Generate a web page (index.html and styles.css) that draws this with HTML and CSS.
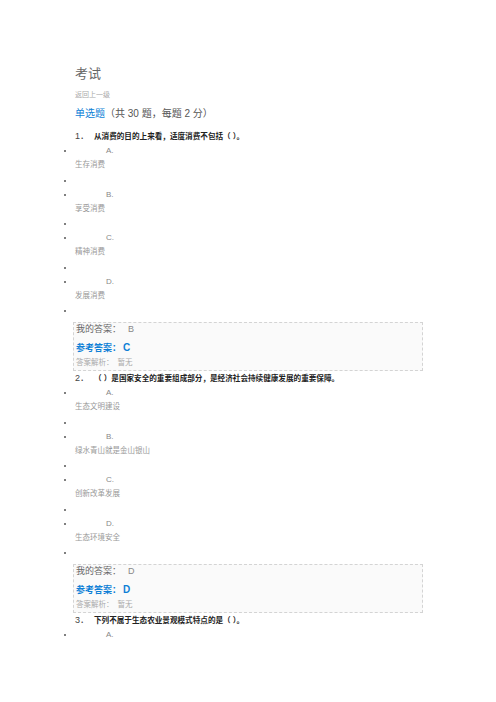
FILE: index.html
```html
<!DOCTYPE html>
<html lang="zh-CN">
<head>
  <meta charset="UTF-8" />
  <title>考试</title>
  <link rel="stylesheet" href="styles.css">
</head>
<body>

<div class="page">
  <h1 class="title">考试</h1>
  <a class="back" href="#">返回上一级</a>
  <h2 class="type"><span class="type-name">单选题</span>（共 30 题，每题 2 分）</h2>

  <!-- QUESTION 1 -->
  <div class="q-title"><span class="q-num">1．</span>从消费的目的上来看，适度消费不包括（ ）。</div>
  <ul class="options">
    <li class="opt-letter">A.</li>
    <li class="opt-text">生存消费</li>
    <li class="opt-empty">&nbsp;</li>
    <li class="opt-letter">B.</li>
    <li class="opt-text">享受消费</li>
    <li class="opt-empty">&nbsp;</li>
    <li class="opt-letter">C.</li>
    <li class="opt-text">精神消费</li>
    <li class="opt-empty">&nbsp;</li>
    <li class="opt-letter">D.</li>
    <li class="opt-text">发展消费</li>
    <li class="opt-empty">&nbsp;</li>
  </ul>
  <div class="answer">
    <div class="my">我的答案：<span class="my-val">B</span></div>
    <div class="ref">参考答案：<span class="ref-val">C</span></div>
    <div class="explain">答案解析：<span class="explain-val">暂无</span></div>
  </div>

  <!-- QUESTION 2 -->
  <div class="q-title"><span class="q-num">2．</span>（ ）是国家安全的重要组成部分，是经济社会持续健康发展的重要保障。</div>
  <ul class="options">
    <li class="opt-letter">A.</li>
    <li class="opt-text">生态文明建设</li>
    <li class="opt-empty">&nbsp;</li>
    <li class="opt-letter">B.</li>
    <li class="opt-text">绿水青山就是金山银山</li>
    <li class="opt-empty">&nbsp;</li>
    <li class="opt-letter">C.</li>
    <li class="opt-text">创新改革发展</li>
    <li class="opt-empty">&nbsp;</li>
    <li class="opt-letter">D.</li>
    <li class="opt-text">生态环境安全</li>
    <li class="opt-empty">&nbsp;</li>
  </ul>
  <div class="answer">
    <div class="my">我的答案：<span class="my-val">D</span></div>
    <div class="ref">参考答案：<span class="ref-val">D</span></div>
    <div class="explain">答案解析：<span class="explain-val">暂无</span></div>
  </div>

  <!-- QUESTION 3 -->
  <div class="q-title"><span class="q-num">3．</span>下列不属于生态农业景观模式特点的是（ ）。</div>
  <ul class="options">
    <li class="opt-letter">A.</li>
  </ul>
</div>

</body>
</html>
```

FILE: styles.css
```css
* {
  box-sizing: border-box;
  margin: 0;
  padding: 0;
}
body {
  font-family: "Liberation Sans", "Noto Sans CJK SC", sans-serif;
  background-color: #fff;
  color: #333;
}

.page {
  padding: 64px 0 0 75px;
  width: 423px;
}

/* HEADER */
.title {
  font-size: 13px;
  font-weight: normal;
  line-height: 20px;
  color: #666;
}
.back {
  display: block;
  font-size: 7px;
  line-height: 22px;
  color: #aaa;
  text-decoration: none;
}
.type {
  font-size: 10px;
  font-weight: normal;
  line-height: 16px;
  color: #555;
}
.type-name {
  color: #0e7fd6;
}

/* QUESTIONS */
.q-title {
  font-size: 7.6px;
  font-weight: bold;
  line-height: 14px;
  color: #222;
}
.q-title:first-of-type {
  margin-top: 7px;
}
.q-num {
  display: inline-block;
  width: 19px;
  font-size: 9px;
  font-weight: normal;
  color: #444;
}
.options {
  list-style: disc;
  margin-bottom: 4px;
}
.options li::marker {
  color: #555;
}
.opt-letter {
  font-size: 8px;
  line-height: 14px;
  padding-left: 31px;
  color: #888;
}
.opt-text {
  list-style: none;
  font-size: 7.5px;
  line-height: 14.5px;
  color: #999;
}
.opt-empty {
  font-size: 8px;
  line-height: 15px;
}

/* ANSWER BOX */
.answer {
  margin-left: -2px;
  padding: 0 0 1px 2px;
  background: #fafafa;
  border: 1px dashed #d4d4d4;
}
.my {
  font-size: 9px;
  line-height: 12px;
  color: #666;
}
.my-val {
  margin-left: 7px;
  font-size: 9px;
  color: #888;
}
.ref {
  font-size: 9px;
  font-weight: bold;
  line-height: 16px;
  margin-top: 5px;
  color: #0e7fd6;
}
.ref-val {
  margin-left: 2px;
  font-size: 10px;
}
.explain {
  font-size: 7.5px;
  line-height: 12px;
  margin-top: 1px;
  color: #aaa;
}
.explain-val {
  margin-left: 4px;
}
```
